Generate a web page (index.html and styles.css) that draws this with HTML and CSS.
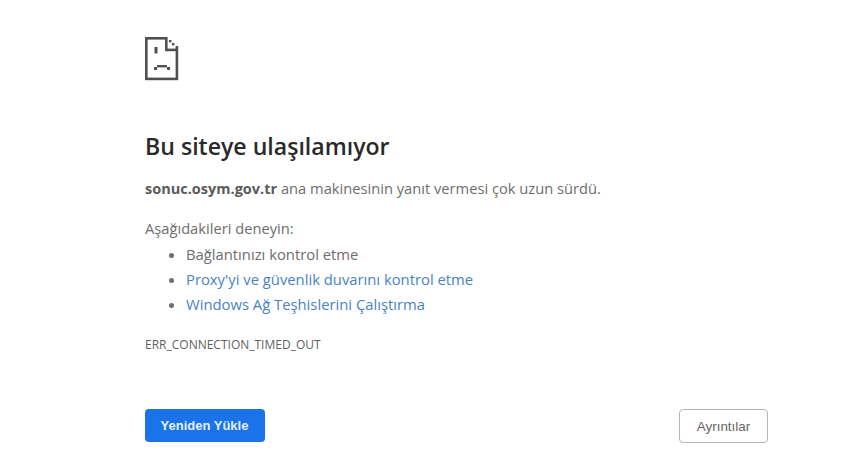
FILE: index.html
```html
<!DOCTYPE html>
<html lang="tr">
<head>
<meta charset="utf-8">
<title>Bu siteye ulaşılamıyor</title>
<link rel="stylesheet" href="styles.css">
</head>
<body>
<main class="page">
  <svg class="icon" width="34" height="44" viewBox="0 0 34 44" aria-hidden="true">
    <g fill="#505050">
      <rect x="0" y="0" width="22" height="2.6"/>
      <rect x="0" y="0" width="2.6" height="43"/>
      <rect x="0" y="40.6" width="33" height="2.6"/>
      <rect x="30.6" y="9" width="2.6" height="34"/>
      <rect x="20" y="0" width="2.6" height="14"/>
      <rect x="20" y="11.6" width="13" height="2.6"/>
      <rect x="24" y="3" width="2.4" height="2.4"/>
      <rect x="27" y="6" width="2.4" height="2.4"/>
      <rect x="9.5" y="10" width="3" height="6.5"/>
      <rect x="12" y="28" width="10" height="2.4"/>
      <rect x="9" y="30" width="3" height="3"/>
      <rect x="22" y="30" width="3" height="3"/>
    </g>
  </svg>
  <h1 class="title">Bu siteye ulaşılamıyor</h1>
  <p class="summary"><strong>sonuc.osym.gov.tr</strong> ana makinesinin yanıt vermesi çok uzun sürdü.</p>
  <p class="try">Aşağıdakileri deneyin:</p>
  <ul class="tips">
    <li>Bağlantınızı kontrol etme</li>
    <li><a href="#">Proxy'yi ve güvenlik duvarını kontrol etme</a></li>
    <li><a href="#">Windows Ağ Teşhislerini Çalıştırma</a></li>
  </ul>
  <p class="code">ERR_CONNECTION_TIMED_OUT</p>
  <div class="actions">
    <button class="btn primary">Yeniden Yükle</button>
    <button class="btn secondary">Ayrıntılar</button>
  </div>
</main>
</body>
</html>
```

FILE: styles.css
```css
html, body { margin: 0; padding: 0; background: #fff; }
body { font-family: "Open Sans", "Noto Sans", sans-serif; color: #6e6e6e; font-size: 14.7px; overflow: hidden; }
.page { width: 623px; margin-left: 145px; padding-top: 37px; display: flex; flex-direction: column; }
.icon { display: block; width: 34px; height: 44px; filter: blur(0.4px); }
.title { margin: 50px 0 0; font-size: 23.1px; line-height: 30px; font-weight: 600; color: #2a2a2a; }
.summary { margin: 17px 0 0; line-height: 20px; }
.summary strong { font-weight: 700; font-size: 14.5px; color: #5a5a5a; }
.try { margin: 19px 0 0; line-height: 20px; }
.tips { margin: 4px 0 0; padding: 0 0 0 41px; list-style: disc; font-size: 14.8px; }
.tips li { line-height: 25px; }
.tips a { color: #4a82c6; text-decoration: none; }
.code { margin: 20px 0 0; font-size: 12px; line-height: 16px; color: #5f5f5f; }
.actions { margin-top: 56px; display: flex; justify-content: space-between; align-items: flex-start; }
.btn { font-family: "Liberation Sans", Arial, sans-serif; font-size: 13px; border-radius: 4px; padding: 0; height: 33px; }
.primary { width: 120px; margin-left: -0.5px; background: #1a73e8; color: #e4efff; border: none; font-weight: 700; }
.secondary { width: 89px; height: 34px; background: #fff; color: #666; font-size: 13.4px; border: 1px solid #b5b5b5; }
```
